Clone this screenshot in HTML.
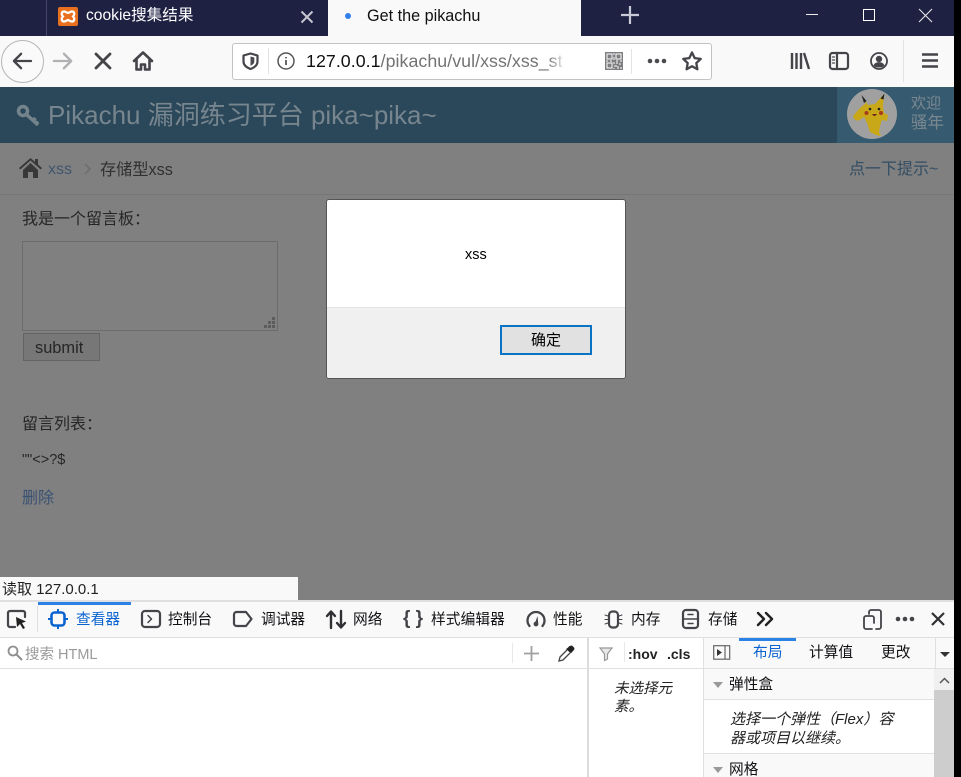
<!DOCTYPE html>
<html lang="zh"><head><meta charset="utf-8"><title>Get the pikachu</title>
<style>
html,body{margin:0;padding:0;width:961px;height:777px;overflow:hidden;background:#000}
body{position:relative;font-family:"Liberation Sans","Noto Sans CJK SC",sans-serif;color:#1a1a1a}
.b{position:absolute}
.t{position:absolute;white-space:nowrap;line-height:1}
svg{position:absolute;overflow:visible}
.i{fill:none;stroke:#444449;stroke-width:2.200;stroke-linecap:round;stroke-linejoin:round}
.d{font-size:14.700px;color:#111114}
</style></head><body>
<div class="b" style="left:0;top:0;width:954px;height:777px;background:#fff;overflow:hidden">

<!-- tab bar -->
<div class="b" style="left:0;top:0;width:954px;height:36px;background:#1f2143"></div>
<div class="b" style="left:46px;top:0;width:1px;height:36px;background:#45466a"></div>
<div class="b" style="left:58px;top:7px;width:20px;height:19px;background:#e8701f;border-radius:2px"></div>
<svg style="left:58px;top:7px" width="20" height="19" viewBox="0 0 20 19"><path d="M6 4.500c2 0 3 1.500 4 1.500s2-1.500 4-1.500c2.500 0 3 3 1 5 2 2 1.500 5-1 5-2 0-3-1.500-4-1.500s-2 1.500-4 1.500c-2.500 0-3-3-1-5-2-2-1.500-5 1-5z" fill="none" stroke="#fff" stroke-width="2.200"/></svg>
<div class="t" style="left:86px;top:8px;font-size:15.600px;color:#fff">cookie搜集结果</div>
<svg style="left:300px;top:10px" width="14" height="14"><path d="M1.500 1.500l11 11M12.500 1.500l-11 11" stroke="#c5c5d0" stroke-width="2"/></svg>
<div class="b" style="left:328px;top:0;width:253px;height:36px;background:#f9f9fa"></div>
<div class="b" style="left:345px;top:13px;width:6px;height:6px;border-radius:50%;background:#2f80ed"></div>
<div class="t" style="left:367px;top:8px;font-size:16.200px;color:#111">Get the pikachu</div>
<svg style="left:581px;top:10px" width="14" height="14"><path d="M1.500 1.500l11 11M12.500 1.500l-11 11" stroke="#333" stroke-width="2"/></svg>
<div class="b" style="left:581px;top:0;width:373px;height:36px;background:#1f2143"></div>
<svg style="left:621px;top:6px" width="18" height="18"><path d="M9 0v18M0 9h18" stroke="#c9cad8" stroke-width="2.200"/></svg>
<div class="b" style="left:806px;top:14px;width:12px;height:1px;background:#eee"></div>
<div class="b" style="left:863px;top:9px;width:10px;height:10px;border:1px solid #fff"></div>
<svg style="left:919px;top:9px" width="13" height="13"><path d="M0 0l13 13M13 0L0 13" stroke="#eee" stroke-width="1"/></svg>

<!-- toolbar -->
<div class="b" style="left:0;top:36px;width:954px;height:51px;background:#f9f9fa"></div>
<div class="b" style="left:1px;top:40px;width:41px;height:41px;border:1px solid #b5b5b8;border-radius:50%;background:#fafafa"></div>
<svg style="left:12px;top:52px" width="20" height="18" viewBox="0 0 22 20"><path d="M21 10H2M10 2l-8 8 8 8" class="i" style="stroke-width:2.600"/></svg>
<svg style="left:53px;top:52px" width="20" height="18" viewBox="0 0 22 19"><path d="M1 9.500h19M12 1.500l8 8-8 8" class="i" style="stroke:#b1b1b3;stroke-width:2.600"/></svg>
<svg style="left:95px;top:53px" width="16" height="16"><path d="M1 1l14 14M15 1L1 15" class="i" style="stroke-width:2.800"/></svg>
<svg style="left:133px;top:51px" width="20" height="20" viewBox="0 0 20 20"><path d="M1 10l9-8.500 9 8.500M3.500 8.500V18.500h4.500v-5h4v5h4.500V8.500" class="i" style="stroke-width:2.600"/></svg>
<div class="b" style="left:232px;top:43px;width:478px;height:35px;background:#fff;border:1px solid #c3c3c6;border-radius:3px"></div>
<svg style="left:242px;top:52px" width="17" height="18" viewBox="0 0 17 18"><path d="M8.500 1.500l7 2v6c0 3.500-3 6-7 7.500-4-1.500-7-4-7-7.500v-6z" class="i"/><path d="M8.500 4.500l3.800 1v4c0 2-1.700 3.300-3.800 4.300z" fill="#4a4a4f"/></svg>
<div class="b" style="left:268px;top:48px;width:1px;height:26px;background:#e3e3e5"></div>
<svg style="left:277px;top:52px" width="18" height="18" viewBox="0 0 18 18"><circle cx="9" cy="9" r="8" class="i" style="stroke-width:1.500;stroke:#555"/><path d="M9 8v5M9 5v1.400" class="i" style="stroke-width:1.800;stroke-linecap:butt;stroke:#555"/></svg>
<div class="t" style="left:306px;top:51px;font-size:17.800px;color:#111;width:262px;overflow:hidden;line-height:20px;height:24px;letter-spacing:.05px">127.0.0.1<span style="color:#737373">/pikachu/vul/xss/xss_st</span></div>
<div class="b" style="left:548px;top:48px;width:22px;height:26px;background:linear-gradient(90deg,rgba(255,255,255,0),#fff 85%)"></div>
<svg style="left:605px;top:52px" width="18" height="18" viewBox="0 0 18 18"><rect width="18" height="18" fill="#7d7d80"/><path d="M2 2h5v5H2zM11 2h5v5h-5zM2 11h5v5H2zM9 1v2M9 5v3M11 9h2M15 9h2M1 9h2M5 9h2M9 10v2M11 11h2M15 11v2M9 14h3M13 14v3M16 15v2M9 16v1" stroke="#fff" stroke-width="1" fill="none"/></svg>
<div class="b" style="left:631px;top:49px;width:1px;height:25px;background:#e3e3e5"></div>
<svg style="left:647px;top:58px" width="20" height="6"><circle cx="3" cy="3" r="2.300" fill="#4a4a4f"/><circle cx="10" cy="3" r="2.300" fill="#4a4a4f"/><circle cx="17" cy="3" r="2.300" fill="#4a4a4f"/></svg>
<svg style="left:682px;top:51px" width="20" height="20" viewBox="0 0 20 20"><path d="M10 1.500l2.700 5.600 6 .8-4.400 4.200 1.100 6.200L10 15.300l-5.400 3 1.100-6.200L1.300 7.900l6-.8z" class="i" style="stroke-width:2.300"/></svg>
<svg style="left:790px;top:52px" width="20" height="18" viewBox="0 0 20 18"><path d="M2 1v16M6.500 1v16M11 1v16M14 1l5 16" class="i" style="stroke-width:2.400;stroke-linecap:butt"/></svg>
<svg style="left:829px;top:52px" width="20" height="18" viewBox="0 0 20 18"><rect x="1" y="1" width="18" height="16" rx="2.500" class="i"/><path d="M8 1v16" class="i"/><path d="M3.500 5h2M3.500 8h2M3.500 11h2" class="i" style="stroke-width:1.200"/></svg>
<svg style="left:870px;top:52px" width="18" height="18" viewBox="0 0 18 18"><circle cx="9" cy="9" r="8" class="i" style="stroke-width:1.800"/><circle cx="9" cy="7" r="3.200" fill="#444449"/><path d="M3.500 13.500c1-2.500 3-3.200 5.500-3.200s4.500.7 5.500 3.200c-1.500 1.500-3.300 2-5.500 2s-4-.5-5.500-2z" fill="#444449"/></svg>
<div class="b" style="left:903px;top:40px;width:1px;height:42px;background:#e3e3e5"></div>
<svg style="left:922px;top:53px" width="16" height="15"><path d="M0 1.500h16M0 7.500h16M0 13.500h16" stroke="#444449" stroke-width="2.400"/></svg>

<!-- page (dimmed) -->
<div class="b" style="left:0;top:87px;width:954px;height:513px;background:#808080"></div>
<div class="b" style="left:0;top:87px;width:954px;height:56px;background:#2a485a"></div>
<div class="b" style="left:837px;top:87px;width:117px;height:56px;background:#365a6f"></div>
<svg style="left:16px;top:104px" width="24" height="24" viewBox="0 0 24 24"><circle cx="7" cy="7" r="4.500" fill="none" stroke="#75838b" stroke-width="3.500"/><path d="M10.500 10.500L22 21M17 16.500l2.500-2.500M20 19.500l2-2" fill="none" stroke="#75838b" stroke-width="3.500"/></svg>
<div class="t" style="left:48px;top:100px;font-size:26px;color:#77858e;line-height:30px">Pikachu 漏洞练习平台 pika~pika~</div>
<svg style="left:847px;top:89px" width="50" height="50" viewBox="0 0 50 50"><circle cx="25" cy="25" r="25" fill="#a0a0a0"/>
<path d="M16 8l5 8 7-1 9-10-1 13 1 6 4 2-1 6-5-1-2 6-1 6 2 4-5-1-6-3-3-9-3-6-6 4-4-2-1-3 7-8 6-5z" fill="#c8a818"/><path d="M14.500 6l5 6-2.500 2zM37.500 4.500l-1 6-3-1z" fill="#222"/><circle cx="23" cy="20" r="1.300" fill="#222"/><circle cx="32" cy="20" r="1.300" fill="#222"/><circle cx="19.500" cy="24" r="2" fill="#a83c1c"/><circle cx="34" cy="24" r="2" fill="#a83c1c"/><path d="M25 25q2.500 4 5 0" fill="#702818"/></svg>
<div class="t" style="left:911px;top:96px;font-size:15px;color:#7b8890">欢迎</div>
<div class="t" style="left:911px;top:115px;font-size:16.500px;color:#7b8890">骚年</div>

<div class="b" style="left:0;top:194px;width:954px;height:1px;background:#777"></div>
<svg style="left:19px;top:158px" width="23" height="20" viewBox="0 0 23 20"><path d="M11.500 0L0 10l1.300 1.500 10.200-9 10.200 9L23 10l-4-3.500V1h-3v3z" fill="#383838"/><path d="M4 12l7.500-7 7.500 7v8h-5v-6H9v6H4z" fill="#383838"/></svg>
<div class="t" style="left:48px;top:162px;font-size:16px;color:#3e566d">xss</div>
<svg style="left:84px;top:163px" width="7" height="12"><path d="M1 1l5 5-5 5" fill="none" stroke="#6c6c6c" stroke-width="1.500"/></svg>
<div class="t" style="left:100px;top:162px;font-size:16.200px;color:#303030">存储型xss</div>
<div class="t" style="left:849px;top:162px;font-size:16px;color:#324d62">点一下提示~</div>
<div class="t" style="left:22px;top:212px;font-size:16px;color:#262626">我是一个留言板：</div>
<div class="b" style="left:22px;top:241px;width:254px;height:88px;border:1px solid #6c6c6c"></div>
<svg style="left:263px;top:317px" width="12" height="12"><path d="M9 0h3v3H9zM5 4h3v3H5zM9 4h3v3H9zM1 8h3v3H1zM5 8h3v3H5zM9 8h3v3H9z" fill="#5c5c5c"/></svg>
<div class="b" style="left:23px;top:333px;width:75px;height:26px;border:1px solid #646464;background:#777"></div>
<div class="t" style="left:35px;top:340px;font-size:16.400px;color:#262626">submit</div>
<div class="t" style="left:22px;top:417px;font-size:16px;color:#262626">留言列表：</div>
<div class="t" style="left:22px;top:453px;font-size:14.500px;color:#262626">""&lt;&gt;?$</div>
<div class="t" style="left:22px;top:491px;font-size:16px;color:#3a5272">删除</div>

<!-- alert dialog -->
<div class="b" style="left:326px;top:199px;width:300px;height:180px;background:#fff;border-radius:3px;box-sizing:border-box;border:1px solid #555;overflow:hidden">
  <div class="b" style="left:0;top:107px;width:298px;height:71px;background:#f0f0f0;border-top:1px solid #e2e2e2"></div>
</div>
<div class="t" style="left:465px;top:248px;font-size:14.500px;color:#000">xss</div>
<div class="b" style="left:500px;top:325px;width:92px;height:30px;box-sizing:border-box;border:2px solid #0a74c4;background:#e1e1e1"></div>
<div class="t" style="left:531px;top:333px;font-size:15px;color:#000">确定</div>

<!-- status -->
<div class="b" style="left:0;top:577px;width:298px;height:23px;background:#f9f9fa"></div>
<div class="t" style="left:2px;top:582px;font-size:15px;color:#222">读取 127.0.0.1</div>

<!-- devtools -->
<div class="b" style="left:0;top:600px;width:954px;height:177px;background:#fff"></div>
<div class="b" style="left:0;top:600px;width:954px;height:2px;background:#e0e0e2"></div>
<div class="b" style="left:0;top:602px;width:954px;height:35px;background:#f9f9fa"></div>
<div class="b" style="left:0;top:637px;width:954px;height:1px;background:#e0e0e2"></div>
<div class="b" style="left:38px;top:602px;width:93px;height:3px;background:#2a82e4"></div>
<svg style="left:7px;top:610px" width="21" height="20" viewBox="0 0 21 20"><path d="M8 17H3a2 2 0 0 1-2-2V3a2 2 0 0 1 2-2h13a2 2 0 0 1 2 2v4" class="i" style="stroke-width:2.200"/><path d="M9 7l10 4.500-4 1.500 3 5-2 1-3-5-3 3z" fill="#222"/></svg>
<div class="b" style="left:37px;top:606px;width:1px;height:26px;background:#e0e0e2"></div>
<svg style="left:48px;top:609px" width="20" height="20" viewBox="0 0 20 20"><rect x="3.500" y="3.500" width="13" height="13" rx="3" fill="none" stroke="#0b63d0" stroke-width="2.600"/><path d="M10 0v3M10 17v3M0 10h3M17 10h3" stroke="#0b63d0" stroke-width="2"/></svg>
<div class="t d" style="left:76px;top:613px;color:#0b63d0">查看器</div>
<svg style="left:141px;top:610px" width="20" height="18" viewBox="0 0 20 18"><rect x="1" y="1" width="18" height="16" rx="3" class="i" style="stroke-width:2.200"/><path d="M7 5.500l3.500 3.500L7 12.500" class="i" style="stroke-width:1.500"/></svg>
<div class="t d" style="left:168px;top:613px">控制台</div>
<svg style="left:233px;top:611px" width="20" height="16" viewBox="0 0 20 16"><path d="M3.500 1H13l5.500 7L13 15H3.500A2.500 2.500 0 0 1 1 12.500v-9A2.500 2.500 0 0 1 3.500 1z" class="i" style="stroke-width:2.200"/></svg>
<div class="t d" style="left:261px;top:613px">调试器</div>
<svg style="left:326px;top:610px" width="20" height="19" viewBox="0 0 20 19"><path d="M5 18V2M1 6l4-4.500L9 6M15 1v16M11 13l4 4.500 4-4.500" class="i" style="stroke-width:2.400;stroke:#303034"/></svg>
<div class="t d" style="left:353px;top:613px">网络</div>
<div class="t" style="left:403px;top:609px;font-size:19px;font-weight:bold;color:#444449">{ }</div>
<div class="t d" style="left:431px;top:613px;letter-spacing:.1px">样式编辑器</div>
<svg style="left:526px;top:609px" width="20" height="20" viewBox="0 0 20 20"><path d="M3.500 17A8.500 8.500 0 1 1 16.500 17" class="i" style="stroke-width:2.300"/><path d="M9 14l2.500-7 .7 7z" fill="#444449"/><circle cx="10" cy="15" r="2.400" fill="#444449"/></svg>
<div class="t d" style="left:553px;top:613px">性能</div>
<svg style="left:604px;top:610px" width="19" height="19" viewBox="0 0 19 19"><rect x="5" y="1.500" width="9" height="16" rx="3.500" class="i" style="stroke-width:2.200"/><path d="M1 5l3 1M1 9.500h3M1 14l3-1M15 6l3-1M15 9.500h3M15 13l3 1" class="i" style="stroke-width:1"/></svg>
<div class="t d" style="left:631px;top:613px">内存</div>
<svg style="left:682px;top:609px" width="17" height="20" viewBox="0 0 17 20"><rect x="1" y="1" width="15" height="18" rx="3" class="i" style="stroke-width:2.200"/><path d="M1 10h15M6 5.500h5M6 14.500h5" class="i" style="stroke-width:1.500"/></svg>
<div class="t d" style="left:708px;top:613px">存储</div>
<svg style="left:756px;top:611px" width="18" height="16" viewBox="0 0 18 16"><path d="M2 2l6 6-6 6M10 2l6 6-6 6" class="i" style="stroke:#222;stroke-width:2.400"/></svg>
<svg style="left:863px;top:609px" width="19" height="21" viewBox="0 0 19 21"><path d="M6 5V3a2 2 0 0 1 2-2h8a2 2 0 0 1 2 2v15a2 2 0 0 1-2 2h-3" class="i" style="stroke-width:1.800"/><path d="M11 14V9a2 2 0 0 0-2-2H3a2 2 0 0 0-2 2v9a2 2 0 0 0 2 2h6" class="i" style="stroke-width:1.800"/></svg>
<svg style="left:895px;top:616px" width="20" height="6"><circle cx="3" cy="3" r="2.300" fill="#444449"/><circle cx="10" cy="3" r="2.300" fill="#444449"/><circle cx="17" cy="3" r="2.300" fill="#444449"/></svg>
<svg style="left:931px;top:612px" width="14" height="14"><path d="M1 1l12 12M13 1L1 13" stroke="#303034" stroke-width="2.200"/></svg>

<!-- search row -->
<div class="b" style="left:0;top:668px;width:587px;height:1px;background:#e0e0e2"></div>
<svg style="left:7px;top:645px" width="16" height="16" viewBox="0 0 16 16"><circle cx="6" cy="6" r="4.500" fill="none" stroke="#8f8f91" stroke-width="1.800"/><path d="M9.500 9.500L15 15" stroke="#8f8f91" stroke-width="2"/></svg>
<div class="t" style="left:25px;top:648px;font-size:14.500px;color:#9a9a9a">搜索 HTML</div>
<div class="b" style="left:512px;top:643px;width:1px;height:20px;background:#e8e8ea"></div>
<svg style="left:524px;top:646px" width="15" height="15"><path d="M7.500 0v15M0 7.500h15" stroke="#a0a0a0" stroke-width="1.800"/></svg>
<svg style="left:558px;top:645px" width="17" height="17" viewBox="0 0 17 17"><path d="M9 5L2 12 1 16l4-1L12 8" fill="#fff" stroke="#444" stroke-width="1.300"/><path d="M8 4l1.500-1 2-2 2.500-.5 2.500 2.500L16 5l-2 2-1 1.500z" fill="#222"/></svg>
<div class="b" style="left:587px;top:638px;width:2px;height:139px;background:#dcdcde"></div>
<svg style="left:599px;top:647px" width="14" height="14" viewBox="0 0 14 14"><path d="M1 1h12L8.500 7v5l-3 1.500V7z" fill="#e8e8e8" stroke="#999" stroke-width="1.200"/></svg>
<div class="b" style="left:624px;top:642px;width:1px;height:20px;background:#e8e8ea"></div>
<div class="t" style="left:628px;top:647px;font-size:14px;font-weight:bold;color:#222">:hov</div>
<div class="t" style="left:667px;top:647px;font-size:14px;font-weight:bold;color:#222">.cls</div>
<div class="b" style="left:703px;top:638px;width:1px;height:139px;background:#e0e0e2"></div>
<div class="b" style="left:589px;top:668px;width:114px;height:1px;background:#e0e0e2"></div>
<div class="t" style="left:614px;top:680px;font-size:14.500px;font-style:italic;color:#222;line-height:18px">未选择元<br>素。</div>

<!-- sidebar -->
<div class="b" style="left:704px;top:638px;width:250px;height:30px;background:#f9f9fa"></div>
<div class="b" style="left:704px;top:668px;width:250px;height:1px;background:#e0e0e2"></div>
<svg style="left:713px;top:645px" width="18" height="15" viewBox="0 0 18 15"><rect x=".7" y=".7" width="16" height="13.500" fill="none" stroke="#666" stroke-width="1.200"/><path d="M12 .7v13.500" stroke="#666" stroke-width="1.200"/><path d="M4 4l5 3.500L4 11z" fill="#333"/></svg>
<div class="b" style="left:739px;top:638px;width:57px;height:3px;background:#2a82e4"></div>
<div class="t d" style="left:753px;top:646px;color:#0b63d0">布局</div>
<div class="t d" style="left:809px;top:646px">计算值</div>
<div class="t d" style="left:881px;top:646px">更改</div>
<div class="b" style="left:935px;top:638px;width:1px;height:30px;background:#e0e0e2"></div>
<svg style="left:940px;top:652px" width="10" height="5"><path d="M0 0h10L5 5z" fill="#333"/></svg>

<div class="b" style="left:704px;top:669px;width:230px;height:30px;background:#f9f9fa;border-bottom:1px solid #e0e0e2"></div>
<svg style="left:713px;top:682px" width="10" height="6"><path d="M0 0h10L5 6z" fill="#999"/></svg>
<div class="t d" style="left:729px;top:678px">弹性盒</div>
<div class="t" style="left:730px;top:710px;font-size:15px;font-style:italic;color:#222;line-height:19px">选择一个弹性（Flex）容<br>器或项目以继续。</div>
<div class="b" style="left:704px;top:753px;width:230px;height:24px;background:#f9f9fa;border-top:1px solid #e0e0e2"></div>
<svg style="left:713px;top:767px" width="10" height="6"><path d="M0 0h10L5 6z" fill="#999"/></svg>
<div class="t d" style="left:729px;top:763px">网格</div>
<div class="b" style="left:934px;top:669px;width:20px;height:108px;background:#f0f0f0"></div>
<div class="b" style="left:934px;top:690px;width:20px;height:87px;background:#cdcdcd"></div>
<svg style="left:939px;top:677px" width="11" height="7"><path d="M1 6l4.500-4.500L10 6" fill="none" stroke="#555" stroke-width="1.500"/></svg>
</div>
</body></html>
